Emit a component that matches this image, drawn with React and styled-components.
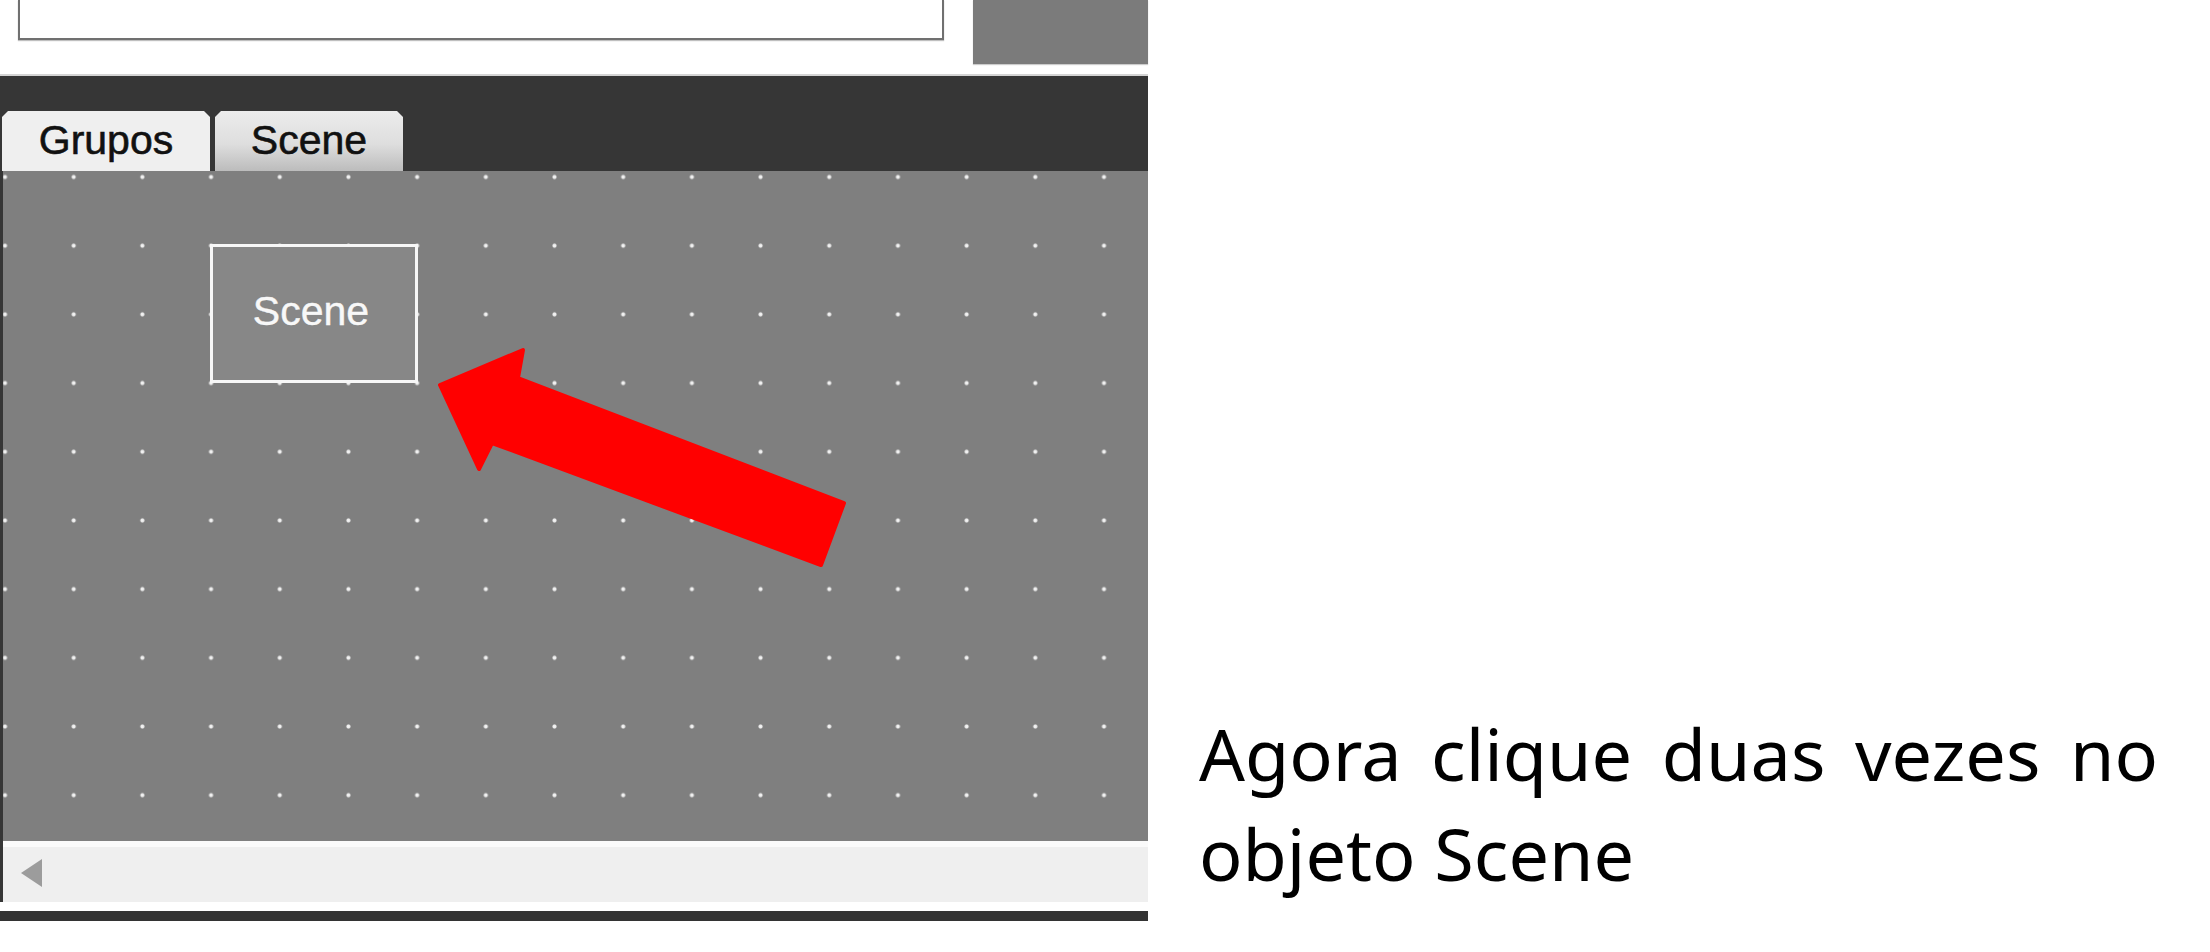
import React from 'react'
import styled, { createGlobalStyle } from 'styled-components'

const GlobalStyle = createGlobalStyle`
    html, body {
        margin: 0;
        padding: 0;
        background: #ffffff;
    }
`;

const Page = styled.div`
    width: 2210px;
    height: 952px;
    display: flex;
    overflow: hidden;
    background: #ffffff;
`;

/* ---------- PANEL IZQUIERDO (captura del editor) ---------- */
const Panel = styled.div`
    width: 1148px;
    flex-shrink: 0;
    display: flex;
    flex-direction: column;
`;

const Header = styled.div`
    height: 74px;
    display: flex;
    align-items: flex-start;
    gap: 29px;
    padding-left: 18px;
    border-bottom: 2px solid #d4d4d4;
    background: #ffffff;
`;

const TextBox = styled.div`
    width: 922px;
    height: 38px;
    background: #ffffff;
    border: 2px solid #707070;
    border-top: none;
    box-shadow: 0 1px 1px rgba(0, 0, 0, 0.25);
`;

const PreviewBlock = styled.div`
    flex: 1;
    height: 64px;
    background: #7b7b7b;
    box-shadow: 0 1px 1px rgba(0, 0, 0, 0.2);
`;

const Frame = styled.div`
    background: #363636;
    display: flex;
    flex-direction: column;
`;

const TabStrip = styled.div`
    height: 95px;
    display: flex;
    align-items: flex-end;
    gap: 5px;
    padding-left: 2px;
`;

const Tab = styled.div`
    width: ${props => props.w}px;
    height: 60px;
    display: flex;
    align-items: center;
    justify-content: center;
    font-family: "Liberation Sans", Arial, sans-serif;
    font-size: 41px;
    color: #111111;
    -webkit-text-stroke: 0.6px #111111;
    background: ${props => props.active
        ? '#efefef'
        : 'linear-gradient(#ececec 0%, #dedede 55%, #bcbcbc 100%)'};
    clip-path: polygon(6px 0, calc(100% - 6px) 0, 100% 6px, 100% 100%, 0 100%, 0 6px);
    padding-bottom: 2px;
    box-sizing: border-box;
`;

const CanvasRow = styled.div`
    padding-left: 3px;
`;

// la cuadrícula de puntos se dibuja con un fondo repetido
const Canvas = styled.div`
    position: relative;
    height: 670px;
    background-color: #7f7f7f;
    background-image: radial-gradient(circle, #f4f4f4 0, #ececec 1.6px, rgba(236, 236, 236, 0) 2.5px);
    background-size: 68.7px 68.7px;
    background-position: -32.35px -28.35px;
    overflow: hidden;
`;

const Node = styled.div`
    position: absolute;
    left: ${props => props.x}px;
    top: ${props => props.y}px;
    width: 208px;
    height: 139px;
    box-sizing: border-box;
    border: 3px solid #f7f7f7;
    background: #878787;
    display: flex;
    align-items: center;
    justify-content: center;
    font-family: "Liberation Sans", Arial, sans-serif;
    font-size: 41px;
    color: #f8f8f8;
    -webkit-text-stroke: 0.4px #f8f8f8;
    padding-bottom: 4px;
    padding-right: 6px;
`;

const ArrowLayer = styled.svg`
    position: absolute;
    left: 0;
    top: 0;
    pointer-events: none;
`;

const ScrollBar = styled.div`
    margin-left: 3px;
    height: 55px;
    background: #efefef;
    border-top: 6px solid #fafafa;
    display: flex;
    align-items: center;
    padding-left: 18px;
`;

const ScrollArrow = styled.div`
    width: 0;
    height: 0;
    border-top: 14px solid transparent;
    border-bottom: 14px solid transparent;
    border-right: 21px solid #9c9c9c;
    margin-top: -4px;
`;

const WhiteGap = styled.div`
    height: 9px;
    background: #ffffff;
`;

const BottomEdge = styled.div`
    height: 10px;
    background: #333333;
`;

/* ---------- COLUMNA DERECHA (instrucción) ---------- */
const Side = styled.div`
    flex: 1;
    display: flex;
    align-items: flex-end;
    padding: 0 52px 49px 51px;
`;

const Instruction = styled.p`
    margin: 0;
    width: 959px;
    font-family: "Noto Sans", Lato, sans-serif;
    font-size: 72px;
    line-height: 100px;
    color: #000000;
    text-align: justify;
`;

const App = () => {
    return (
        <Page>
            <GlobalStyle />
            <Panel>
                <Header>
                    <TextBox />
                    <PreviewBlock />
                </Header>
                <Frame>
                    <TabStrip>
                        <Tab w={208} active>Grupos</Tab>
                        <Tab w={188}>Scene</Tab>
                    </TabStrip>
                    <CanvasRow>
                        <Canvas>
                            <Node x={207} y={73}>Scene</Node>
                            {/* flecha roja señalando el objeto */}
                            <ArrowLayer width="1145" height="670" viewBox="3 171 1145 670">
                                <polygon
                                    points="440,385 523,350 518,378 844,503 821,565 492,443 479,469"
                                    fill="#ff0000"
                                    stroke="#ff0000"
                                    strokeWidth="4"
                                    strokeLinejoin="round"
                                />
                            </ArrowLayer>
                        </Canvas>
                    </CanvasRow>
                    <ScrollBar>
                        <ScrollArrow />
                    </ScrollBar>
                    <WhiteGap />
                    <BottomEdge />
                </Frame>
            </Panel>
            <Side>
                <Instruction>Agora clique duas vezes no objeto Scene</Instruction>
            </Side>
        </Page>
    )
}

export default App
